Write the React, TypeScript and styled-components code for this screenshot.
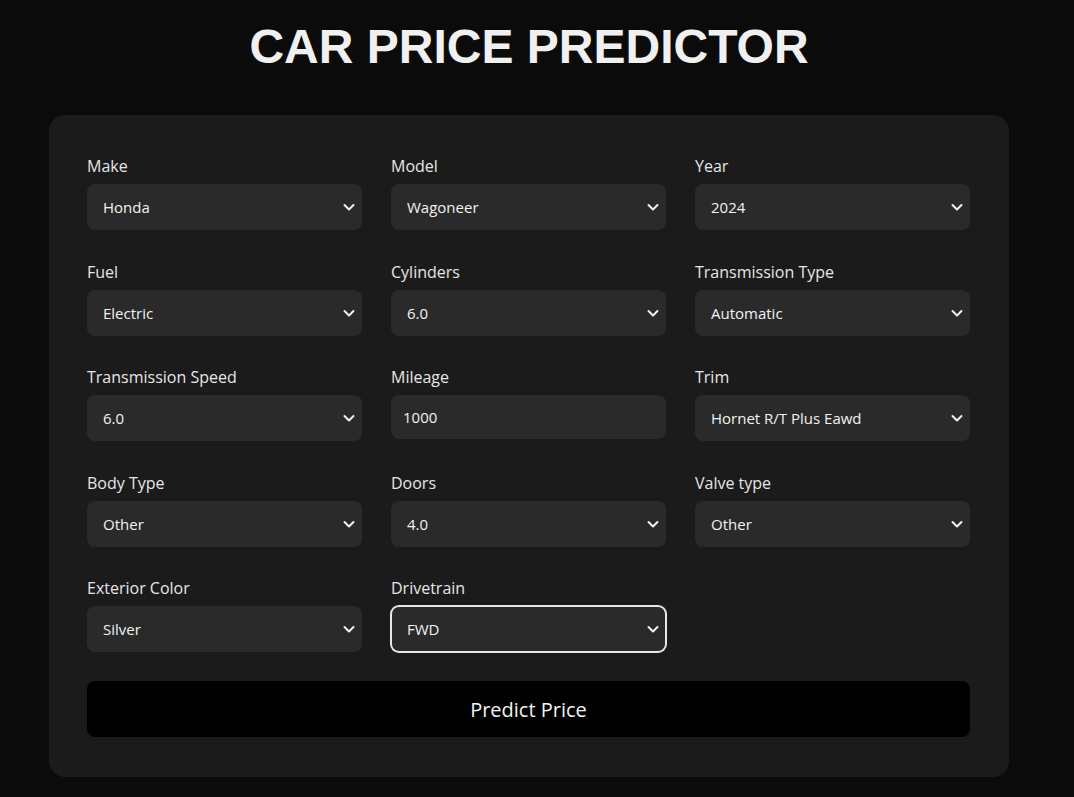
import styled, { createGlobalStyle } from "styled-components";

const GlobalStyle = createGlobalStyle`
  html, body {
    margin: 0;
    padding: 0;
    background: #0b0b0b;
  }
  body {
    font-family: "Open Sans", "Noto Sans", sans-serif;
    color: #ececec;
  }
`;

const Page = styled.div`
  width: 1058px;
  min-height: 797px;
  display: flex;
  flex-direction: column;
  align-items: center;
  box-sizing: border-box;
`;

const Title = styled.h1`
  margin: 19px 0 41px;
  font-family: "Liberation Sans", Arial, sans-serif;
  font-size: 48px;
  font-weight: 700;
  line-height: 55px;
  color: #f0f0f0;
`;

const Card = styled.form`
  width: 960px;
  box-sizing: border-box;
  padding: 39px 39px 40px 38px;
  background: #1b1b1b;
  border-radius: 16px;
  display: flex;
  flex-direction: column;
  gap: 29px;
`;

const Grid = styled.div`
  display: grid;
  grid-template-columns: repeat(3, 275px);
  column-gap: 29px;
  row-gap: 29.5px;
`;

const Field = styled.div`
  display: flex;
  flex-direction: column;
  gap: 6px;
`;

const Label = styled.label`
  font-size: 16px;
  line-height: 24px;
  color: #e6e6e6;
`;

const SelectWrap = styled.div`
  position: relative;
`;

const Select = styled.select<{ $focused?: boolean }>`
  appearance: none;
  width: 100%;
  height: 46px;
  box-sizing: border-box;
  padding: 0 36px 0 15px;
  background: #2a2a2a;
  color: #f2f2f2;
  font-family: "Open Sans", "Noto Sans", sans-serif;
  font-size: 15px;
  border: 1px solid ${(p) => (p.$focused ? "#e8e8e8" : "transparent")};
  border-radius: 8px;
  outline: none;
  box-shadow: ${(p) => (p.$focused ? "0 0 0 1px #e8e8e8" : "none")};
`;

const Chevron = styled.svg`
  position: absolute;
  right: 7px;
  top: 50%;
  width: 12px;
  height: 12px;
  transform: translateY(-50%);
  pointer-events: none;
`;

const Input = styled.input`
  width: 100%;
  height: 44px;
  box-sizing: border-box;
  padding: 0 12px;
  background: #2a2a2a;
  color: #f2f2f2;
  font-family: "Open Sans", "Noto Sans", sans-serif;
  font-size: 15px;
  border: none;
  border-radius: 8px;
  outline: none;
`;

const Button = styled.button`
  height: 56px;
  background: #000;
  color: #f2f2f2;
  border: none;
  border-radius: 8px;
  font-family: "Open Sans", "Noto Sans", sans-serif;
  font-size: 20px;
  cursor: pointer;
`;

type FieldDef = { label: string; value: string; input?: boolean; focused?: boolean };

const fields: FieldDef[] = [
  { label: "Make", value: "Honda" },
  { label: "Model", value: "Wagoneer" },
  { label: "Year", value: "2024" },
  { label: "Fuel", value: "Electric" },
  { label: "Cylinders", value: "6.0" },
  { label: "Transmission Type", value: "Automatic" },
  { label: "Transmission Speed", value: "6.0" },
  { label: "Mileage", value: "1000", input: true },
  { label: "Trim", value: "Hornet R/T Plus Eawd" },
  { label: "Body Type", value: "Other" },
  { label: "Doors", value: "4.0" },
  { label: "Valve type", value: "Other" },
  { label: "Exterior Color", value: "Silver" },
  { label: "Drivetrain", value: "FWD", focused: true },
];

const App = () => {
  return (
    <Page>
      <GlobalStyle />
      <Title>CAR PRICE PREDICTOR</Title>
      <Card onSubmit={(e) => e.preventDefault()}>
        <Grid>
          {fields.map((f) => (
            <Field key={f.label}>
              <Label>{f.label}</Label>
              {f.input ? (
                <Input type="number" defaultValue={f.value} />
              ) : (
                <SelectWrap>
                  <Select $focused={f.focused} defaultValue={f.value}>
                    <option>{f.value}</option>
                  </Select>
                  <Chevron viewBox="0 0 12 12">
                    <path
                      d="M1.5 4 L6 8.5 L10.5 4"
                      fill="none"
                      stroke="#f0f0f0"
                      strokeWidth="2"
                      strokeLinecap="round"
                      strokeLinejoin="round"
                    />
                  </Chevron>
                </SelectWrap>
              )}
            </Field>
          ))}
        </Grid>
        <Button type="submit">Predict Price</Button>
      </Card>
    </Page>
  );
};

export default App;
